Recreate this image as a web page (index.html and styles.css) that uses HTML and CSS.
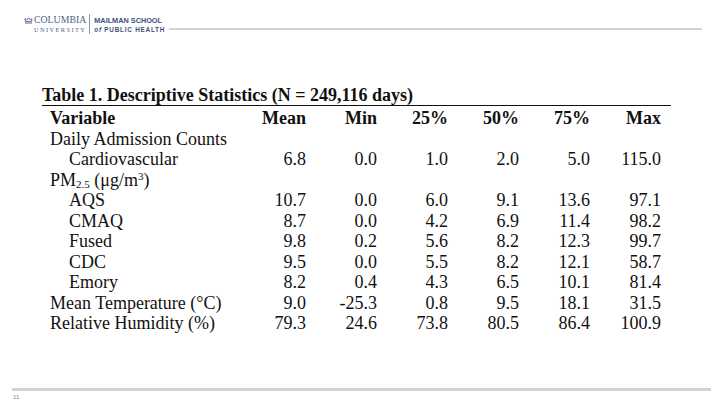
FILE: index.html
```html
<!DOCTYPE html>
<html>
<head>
<meta charset="utf-8">
<link rel="stylesheet" href="styles.css">
</head>
<body>
<div class="slide">
  <header class="top">
    <div class="logo">
      <div class="cu">
        <div class="cu-row">
          <svg class="crown" width="9" height="7" viewBox="0 0 9 7">
            <path d="M1 6 H8 M1.2 4.6 H7.8 M1.3 4.4 L1 1.6 L2.8 3 L4.5 0.8 L6.2 3 L8 1.6 L7.7 4.4" fill="none" stroke="#4f5f86" stroke-width="0.9"/>
          </svg>
          <span class="columbia">COLUMBIA</span>
        </div>
        <div class="university">UNIVERSITY</div>
      </div>
      <div class="divider"></div>
      <div class="mailman">
        <div class="ms">MAILMAN SCHOOL</div>
        <div class="ph"><i>of</i> PUBLIC HEALTH</div>
      </div>
    </div>
    <div class="rule"></div>
  </header>

  <main class="content">
    <div class="title">Table 1. Descriptive Statistics (N = 249,116 days)</div>
    <table class="stats">
      <colgroup>
        <col class="c-label"><col class="c-num"><col class="c-num"><col class="c-num"><col class="c-num"><col class="c-num"><col class="c-num">
      </colgroup>
      <thead>
        <tr><th class="lbl">Variable</th><th>Mean</th><th>Min</th><th>25%</th><th>50%</th><th>75%</th><th>Max</th></tr>
      </thead>
      <tbody>
        <tr><td class="lbl">Daily Admission Counts</td><td></td><td></td><td></td><td></td><td></td><td></td></tr>
        <tr><td class="lbl sub">Cardiovascular</td><td>6.8</td><td>0.0</td><td>1.0</td><td>2.0</td><td>5.0</td><td>115.0</td></tr>
        <tr><td class="lbl">PM<span class="sb">2.5</span> (μg/m<span class="sp">3</span>)</td><td></td><td></td><td></td><td></td><td></td><td></td></tr>
        <tr><td class="lbl sub">AQS</td><td>10.7</td><td>0.0</td><td>6.0</td><td>9.1</td><td>13.6</td><td>97.1</td></tr>
        <tr><td class="lbl sub">CMAQ</td><td>8.7</td><td>0.0</td><td>4.2</td><td>6.9</td><td>11.4</td><td>98.2</td></tr>
        <tr><td class="lbl sub">Fused</td><td>9.8</td><td>0.2</td><td>5.6</td><td>8.2</td><td>12.3</td><td>99.7</td></tr>
        <tr><td class="lbl sub">CDC</td><td>9.5</td><td>0.0</td><td>5.5</td><td>8.2</td><td>12.1</td><td>58.7</td></tr>
        <tr><td class="lbl sub">Emory</td><td>8.2</td><td>0.4</td><td>4.3</td><td>6.5</td><td>10.1</td><td>81.4</td></tr>
        <tr><td class="lbl">Mean Temperature (°C)</td><td>9.0</td><td>-25.3</td><td>0.8</td><td>9.5</td><td>18.1</td><td>31.5</td></tr>
        <tr><td class="lbl">Relative Humidity (%)</td><td>79.3</td><td>24.6</td><td>73.8</td><td>80.5</td><td>86.4</td><td>100.9</td></tr>
      </tbody>
    </table>
  </main>

  <footer class="foot">
    <div class="foot-rule"></div>
    <div class="page-num">11</div>
  </footer>
</div>
</body>
</html>
```
FILE: styles.css
```css
html, body {
  margin: 0;
  padding: 0;
  background: #ffffff;
}
.slide {
  width: 720px;
  height: 405px;
  overflow: hidden;
  display: flex;
  flex-direction: column;
  background: #ffffff;
}
.top {
  display: flex;
  align-items: flex-start;
  padding: 15px 18px 0 24px;
  height: 20px;
}
.logo {
  display: flex;
  align-items: flex-start;
  color: #4f5f86;
}
.cu {
  display: flex;
  flex-direction: column;
}
.cu-row {
  display: flex;
  align-items: center;
  gap: 1px;
  height: 10px;
}
.crown {
  display: block;
}
.columbia {
  font-family: "Liberation Serif", serif;
  font-size: 9.8px;
  line-height: 10px;
}
.university {
  font-family: "Liberation Serif", serif;
  font-size: 6.3px;
  line-height: 8px;
  letter-spacing: 1.45px;
  padding-left: 10px;
  margin-top: 1px;
}
.divider {
  width: 1px;
  height: 20px;
  background: #8a94ae;
  margin: -1px 4px 0 3px;
}
.mailman {
  display: flex;
  flex-direction: column;
  font-family: "Liberation Sans", sans-serif;
  color: #3e4f80;
  padding-top: 1px;
}
.ms {
  font-weight: bold;
  font-size: 7.3px;
  line-height: 9px;
}
.ph {
  font-size: 6.4px;
  line-height: 8px;
  letter-spacing: 0.75px;
  margin-top: 1px;
  font-weight: bold;
}
.ph i {
  font-weight: bold;
}
.rule {
  flex: 1;
  height: 2.5px;
  background: #d4d4d4;
  margin: 12.5px 0 0 4px;
}

.content {
  padding: 50px 0 0 42px;
  font-family: "Liberation Serif", "Times New Roman", serif;
  color: #111111;
}
.title {
  width: 629px;
  font-size: 18px;
  font-weight: bold;
  line-height: 20px;
  border-bottom: 1.5px solid #111111;
  white-space: nowrap;
}
.stats {
  border-collapse: collapse;
  table-layout: fixed;
  width: 628px;
  margin-top: 2px;
  font-size: 18px;
}
.c-label { width: 202px; }
.c-num { width: 71px; }
.stats th, .stats td {
  padding: 0 9px 0 0;
  height: 20.5px;
  line-height: 20.5px;
  text-align: right;
  white-space: nowrap;
  vertical-align: baseline;
}
.stats th {
  font-weight: bold;
}
.stats .lbl {
  text-align: left;
  padding-left: 8px;
  padding-right: 0;
}
.stats .lbl.sub {
  padding-left: 27px;
}
.sb {
  font-size: 11px;
  vertical-align: -2px;
  line-height: 0;
}
.sp {
  font-size: 11px;
  vertical-align: 6px;
  line-height: 0;
}

.foot {
  margin-top: auto;
  height: 17px;
  padding: 0 9px 0 12px;
}
.foot-rule {
  height: 3px;
  background: #d4d4d4;
}
.page-num {
  font-family: "Liberation Sans", sans-serif;
  font-size: 6px;
  line-height: 8px;
  color: #8a8a8a;
  padding: 2px 0 0 1px;
}
```
